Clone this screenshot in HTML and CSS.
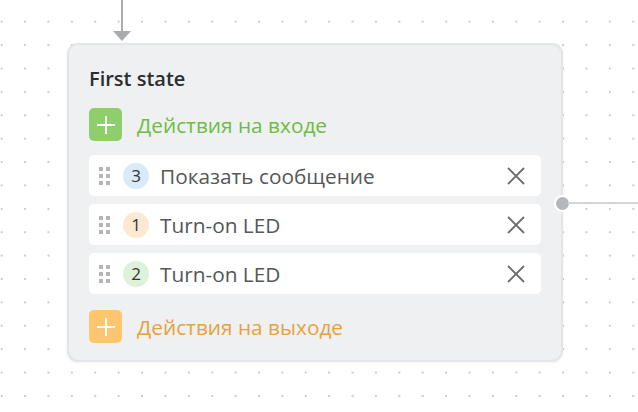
FILE: index.html
```html
<!DOCTYPE html>
<html lang="en">
<head>
    <meta charset="UTF-8">
    <title>State editor</title>
    <link rel="stylesheet" href="styles.css">
</head>
<body>
<div class="canvas">
    <div class="edge-in">
        <span class="edge-line"></span>
        <span class="edge-arrow"></span>
    </div>

    <div class="state">
        <h2 class="state-name">First state</h2>

        <div class="event entry">
            <span class="add-btn">
                <svg viewBox="0 0 32 32" width="32" height="32"><path d="M16 7v18M7 16h18"/></svg>
            </span>
            <span class="event-label">Действия на входе</span>
        </div>

        <ul class="actions">
            <li class="action">
                <span class="grip"><i></i><i></i><i></i><i></i><i></i><i></i></span>
                <span class="badge blue">3</span>
                <span class="action-name">Показать сообщение</span>
                <svg class="remove" viewBox="0 0 18 18" width="18" height="18"><path d="M1 1l16 16M17 1L1 17"/></svg>
            </li>
            <li class="action">
                <span class="grip"><i></i><i></i><i></i><i></i><i></i><i></i></span>
                <span class="badge orange">1</span>
                <span class="action-name">Turn-on LED</span>
                <svg class="remove" viewBox="0 0 18 18" width="18" height="18"><path d="M1 1l16 16M17 1L1 17"/></svg>
            </li>
            <li class="action">
                <span class="grip"><i></i><i></i><i></i><i></i><i></i><i></i></span>
                <span class="badge green">2</span>
                <span class="action-name">Turn-on LED</span>
                <svg class="remove" viewBox="0 0 18 18" width="18" height="18"><path d="M1 1l16 16M17 1L1 17"/></svg>
            </li>
        </ul>

        <div class="event exit">
            <span class="add-btn">
                <svg viewBox="0 0 32 32" width="32" height="32"><path d="M16 7v18M7 16h18"/></svg>
            </span>
            <span class="event-label">Действия на выходе</span>
        </div>

        <span class="port"></span>
    </div>

    <span class="edge-out"></span>
</div>
</body>
</html>
```

FILE: styles.css
```css
* {
    box-sizing: border-box;
}
body {
    margin: 0;
    font-family: "Open Sans", "Noto Sans", sans-serif;
    background: #fff;
}
.canvas {
    position: relative;
    width: 638px;
    height: 412px;
    overflow: hidden;
    background-image: radial-gradient(circle, #c9cbce 0.9px, transparent 1.2px);
    background-size: 23.4px 23.4px;
    background-position: -10px 10px;
}

/* incoming transition */
.edge-in {
    position: absolute;
    left: 113px;
    top: 0;
    width: 18px;
    display: flex;
    flex-direction: column;
    align-items: center;
}
.edge-line {
    width: 2px;
    height: 31px;
    background: #a9abae;
}
.edge-arrow {
    width: 0;
    height: 0;
    border-left: 9px solid transparent;
    border-right: 9px solid transparent;
    border-top: 10px solid #a9abae;
}

/* outgoing transition */
.edge-out {
    position: absolute;
    left: 568px;
    top: 202px;
    width: 80px;
    height: 2px;
    background: #d3d5d8;
}

/* state node */
.state {
    position: absolute;
    left: 67px;
    top: 43px;
    width: 496px;
    height: 319px;
    padding: 22px 20px 0 20px;
    background: #eef0f2;
    border: 2px solid #e3e5e8;
    border-radius: 11px;
    box-shadow: 0 1px 3px rgba(0, 0, 0, 0.06);
}
.state-name {
    margin: 0;
    font-size: 20px;
    font-weight: 600;
    line-height: 24px;
    color: #2b2d30;
}
.port {
    position: absolute;
    right: -10px;
    top: 150px;
    width: 17px;
    height: 17px;
    border-radius: 50%;
    background: #b5b7ba;
    border: 2px solid #fff;
}

.event {
    display: flex;
    align-items: center;
    gap: 15px;
}
.entry {
    margin-top: 17px;
}
.exit {
    margin-top: 16px;
}
.add-btn {
    width: 33px;
    height: 33px;
    border-radius: 5px;
    display: flex;
    align-items: center;
    justify-content: center;
}
.add-btn svg {
    stroke: #fff;
    stroke-width: 2;
    fill: none;
}
.entry .add-btn {
    background: #8fce6c;
}
.exit .add-btn {
    background: #fdc56e;
}
.event-label {
    font-size: 20.8px;
    line-height: 28px;
}
.entry .event-label {
    color: #6dbd45;
}
.exit .event-label {
    color: #e7a23e;
}

.actions {
    list-style: none;
    margin: 14px 0 0;
    padding: 0;
    display: flex;
    flex-direction: column;
    gap: 8px;
}
.action {
    display: flex;
    align-items: center;
    height: 41px;
    padding: 0 16px 0 10px;
    background: #fff;
    border-radius: 5px;
}
.grip {
    display: grid;
    grid-template-columns: 4px 4px;
    gap: 3px 3px;
    width: 11px;
}
.grip i {
    width: 4px;
    height: 4px;
    background: #b4b6b9;
}
.badge {
    width: 26px;
    height: 26px;
    margin-left: 13px;
    border-radius: 50%;
    display: flex;
    align-items: center;
    justify-content: center;
    font-size: 17px;
    color: #333;
}
.badge.blue {
    background: #d9ebf8;
}
.badge.orange {
    background: #fde9d2;
}
.badge.green {
    background: #dff1d9;
}
.action-name {
    flex: 1;
    margin-left: 11px;
    font-size: 20.8px;
    line-height: 28px;
    color: #555759;
}
.remove {
    stroke: #6b6d70;
    stroke-width: 1.8;
    fill: none;
}
```
